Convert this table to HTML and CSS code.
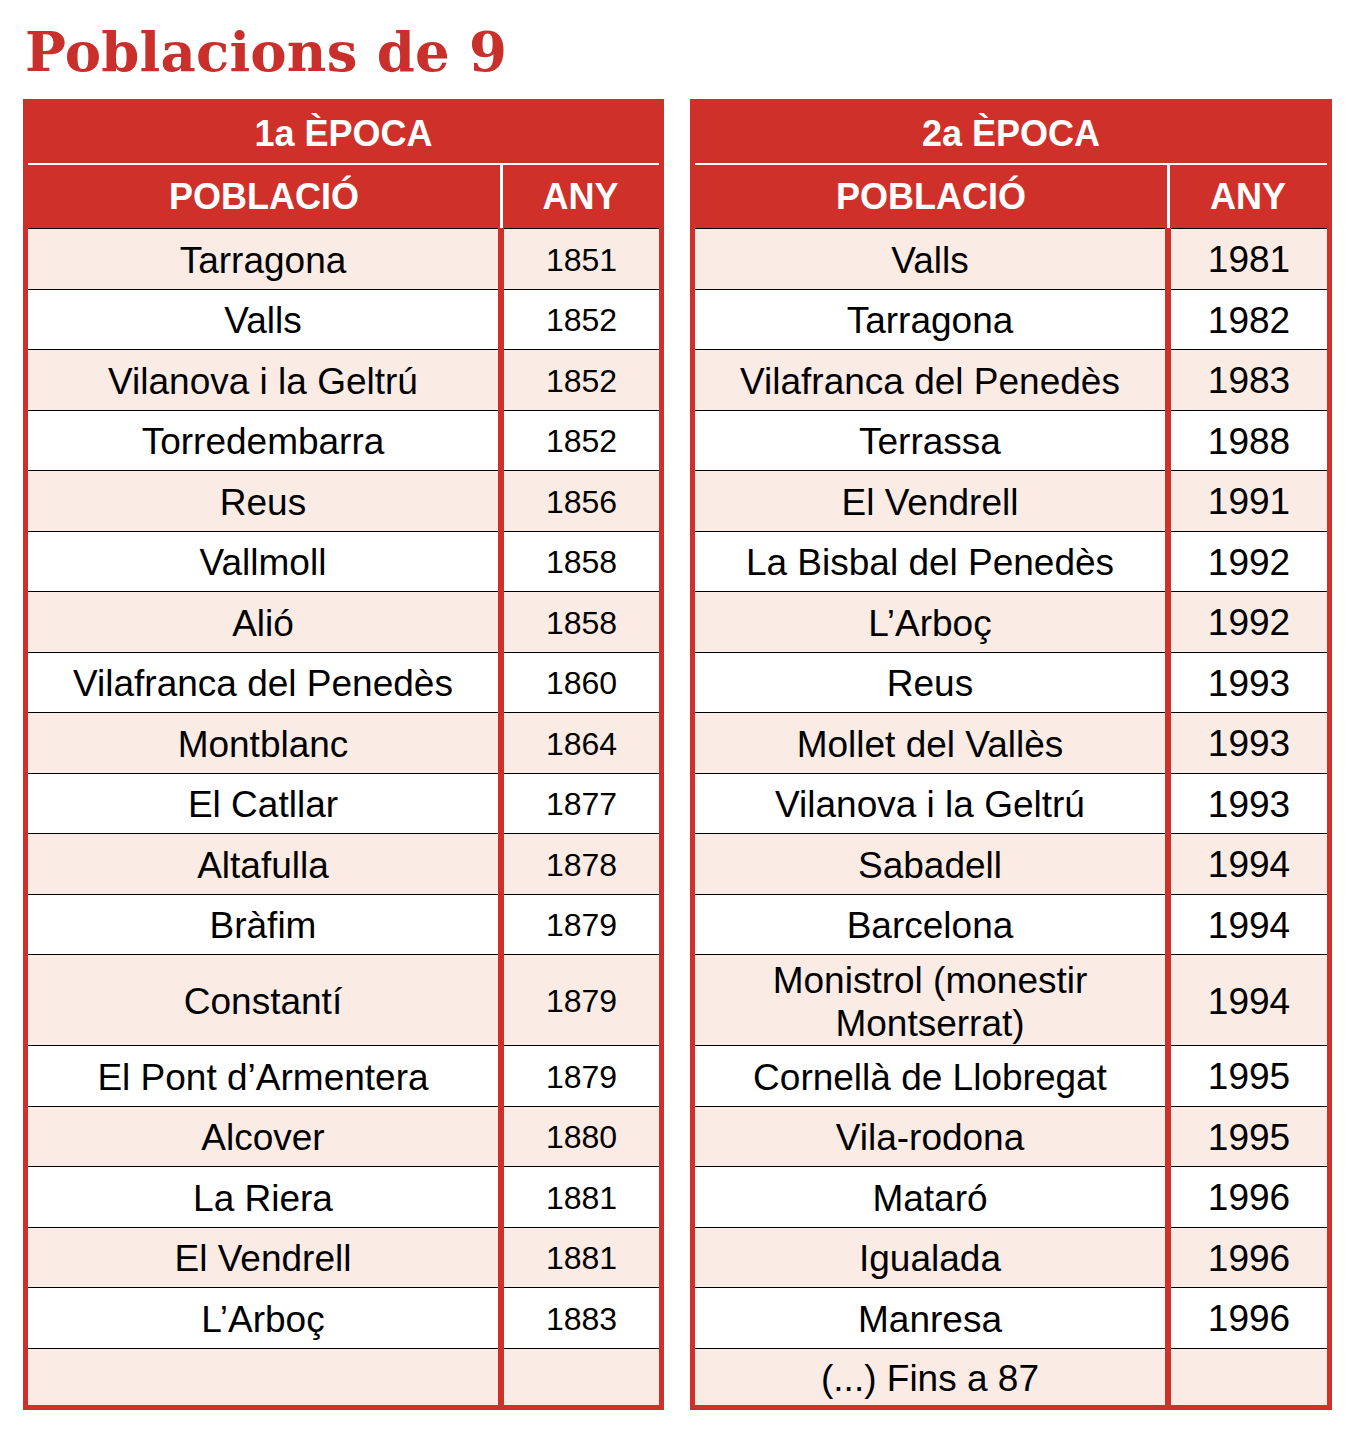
FILE: index.html
```html
<!DOCTYPE html>
<html lang="ca">
<head>
<meta charset="utf-8">
<title>Poblacions de 9</title>
<link rel="stylesheet" href="styles.css">
</head>
<body>
<h1 class="title">Poblacions de 9</h1>
<div class="tables">
  <section class="tbl">
    <div class="h-epoca">1a ÈPOCA</div>
    <div class="h-cols"><div class="hc">POBLACIÓ</div><div class="hc hc-any">ANY</div></div>
    <div class="body">
      <div class="c n p">Tarragona</div><div class="c y p">1851</div>
      <div class="c n">Valls</div><div class="c y">1852</div>
      <div class="c n p">Vilanova i la Geltrú</div><div class="c y p">1852</div>
      <div class="c n">Torredembarra</div><div class="c y">1852</div>
      <div class="c n p">Reus</div><div class="c y p">1856</div>
      <div class="c n">Vallmoll</div><div class="c y">1858</div>
      <div class="c n p">Alió</div><div class="c y p">1858</div>
      <div class="c n">Vilafranca del Penedès</div><div class="c y">1860</div>
      <div class="c n p">Montblanc</div><div class="c y p">1864</div>
      <div class="c n">El Catllar</div><div class="c y">1877</div>
      <div class="c n p">Altafulla</div><div class="c y p">1878</div>
      <div class="c n">Bràfim</div><div class="c y">1879</div>
      <div class="c n p tall">Constantí</div><div class="c y p tall">1879</div>
      <div class="c n">El Pont d’Armentera</div><div class="c y">1879</div>
      <div class="c n p">Alcover</div><div class="c y p">1880</div>
      <div class="c n">La Riera</div><div class="c y">1881</div>
      <div class="c n p">El Vendrell</div><div class="c y p">1881</div>
      <div class="c n">L’Arboç</div><div class="c y">1883</div>
      <div class="c n p last"></div><div class="c y p last"></div>
    </div>
  </section>
  <section class="tbl">
    <div class="h-epoca">2a ÈPOCA</div>
    <div class="h-cols"><div class="hc">POBLACIÓ</div><div class="hc hc-any">ANY</div></div>
    <div class="body body-2">
      <div class="c n p">Valls</div><div class="c y p">1981</div>
      <div class="c n">Tarragona</div><div class="c y">1982</div>
      <div class="c n p">Vilafranca del Penedès</div><div class="c y p">1983</div>
      <div class="c n">Terrassa</div><div class="c y">1988</div>
      <div class="c n p">El Vendrell</div><div class="c y p">1991</div>
      <div class="c n">La Bisbal del Penedès</div><div class="c y">1992</div>
      <div class="c n p">L’Arboç</div><div class="c y p">1992</div>
      <div class="c n">Reus</div><div class="c y">1993</div>
      <div class="c n p">Mollet del Vallès</div><div class="c y p">1993</div>
      <div class="c n">Vilanova i la Geltrú</div><div class="c y">1993</div>
      <div class="c n p">Sabadell</div><div class="c y p">1994</div>
      <div class="c n">Barcelona</div><div class="c y">1994</div>
      <div class="c n p tall"><span class="wrap">Monistrol (monestir Montserrat)</span></div><div class="c y p tall">1994</div>
      <div class="c n">Cornellà de Llobregat</div><div class="c y">1995</div>
      <div class="c n p">Vila-rodona</div><div class="c y p">1995</div>
      <div class="c n">Mataró</div><div class="c y">1996</div>
      <div class="c n p">Igualada</div><div class="c y p">1996</div>
      <div class="c n">Manresa</div><div class="c y">1996</div>
      <div class="c n p last">(...) Fins a 87</div><div class="c y p last"></div>
    </div>
  </section>
</div>
</body>
</html>
```

FILE: styles.css
```css
* { box-sizing: border-box; }

html, body {
  margin: 0;
  padding: 0;
  background: #ffffff;
}

body {
  width: 1366px;
  min-height: 1434px;
  font-family: "Liberation Sans", Arial, sans-serif;
  color: #000;
}

.title {
  margin: 22px 0 17px 25px;
  font-family: "DejaVu Serif", "Liberation Serif", serif;
  font-weight: bold;
  font-size: 54.5px;
  line-height: 60px;
  color: #c9302b;
  letter-spacing: 0.2px;
}

.tables {
  display: grid;
  grid-template-columns: 641px 642px;
  column-gap: 26px;
  margin-left: 23px;
  align-items: start;
}

.tbl {
  border: 5px solid #cf3029;
  background: #cf3029;
}

.h-epoca {
  height: 61px;
  border-bottom: 2px solid #ffffff;
  display: flex;
  align-items: center;
  justify-content: center;
  color: #fff;
  font-weight: bold;
  font-size: 36px;
}

.h-cols {
  display: grid;
  grid-template-columns: 472px 1fr;
  height: 63px;
}

.hc {
  display: flex;
  align-items: center;
  justify-content: center;
  color: #fff;
  font-weight: bold;
  font-size: 36px;
  padding-top: 1px;
}

.hc-any {
  border-left: 3px solid #ffffff;
  padding-right: 1px;
}

.body {
  display: grid;
  grid-template-columns: 470px 1fr;
  column-gap: 6px;
  background: #cf3029;
}

.c {
  height: 60.5px;
  border-top: 1px solid #000;
  padding-top: 3px;
  background: #ffffff;
  display: flex;
  align-items: center;
  justify-content: center;
  text-align: center;
}

.c.p { background: #faece4; }

.c.tall { height: 91px; }
.c.last { height: 57px; }

.n {
  font-size: 37px;
  line-height: 43px;
}

.y {
  font-size: 32px;
}

.body-2 .y {
  font-size: 37px;
}

.wrap {
  display: block;
  padding: 0 40px;
}
```
